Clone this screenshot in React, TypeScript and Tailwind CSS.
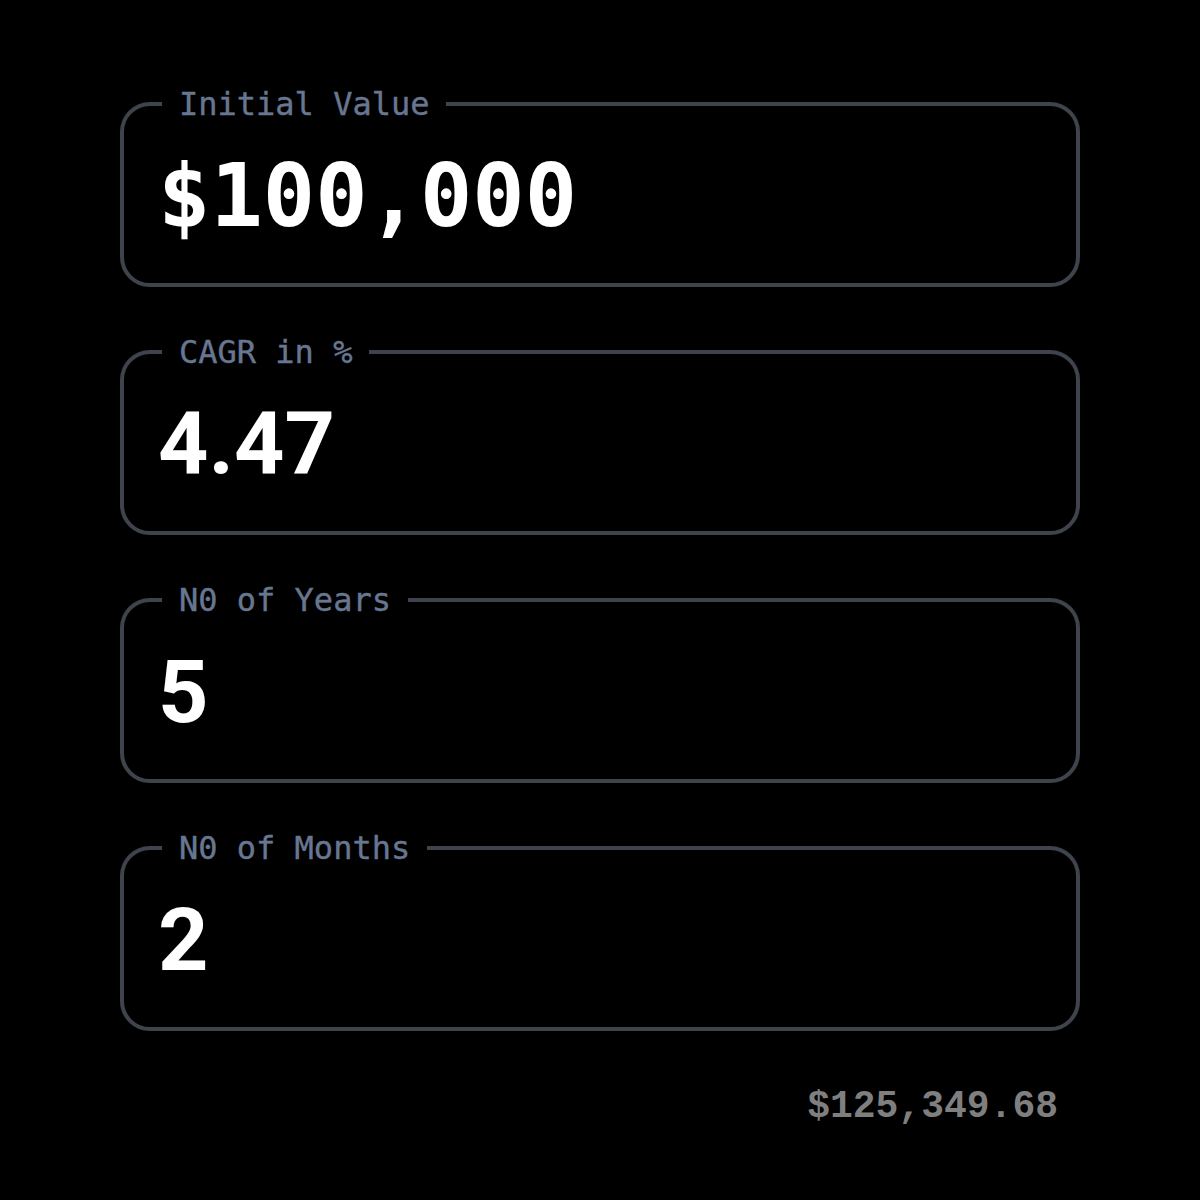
import React from "react";

const fields = [
  { label: "Initial Value", value: "$100,000", mono: true },
  { label: "CAGR in %", value: "4.47", mono: false },
  { label: "N0 of Years", value: "5", mono: false },
  { label: "N0 of Months", value: "2", mono: false },
];

export default function App() {
  return (
    <div className="min-h-screen w-full bg-black flex justify-center pt-[85px]">
      <div className="w-[960px] flex flex-col gap-[46px]">
        {fields.map((f) => (
          <fieldset
            key={f.label}
            className="border-4 border-[#3f434b] rounded-[30px] pl-[34px] pr-[36px] m-0"
          >
            <legend className="ml-[4px] px-[17px] text-[32px] leading-[38px] text-[#687791] font-['DejaVu_Sans_Mono',monospace] [-webkit-text-stroke:0.4px_#687791]">
              {f.label}
            </legend>
            <div className="h-[160px] flex items-center pb-[14px]">
              <span
                className={
                  f.mono
                    ? "text-white font-bold text-[87px] leading-none font-['DejaVu_Sans_Mono',monospace]"
                    : "text-white font-bold text-[88px] leading-none font-['Roboto',sans-serif]"
                }
              >
                {f.value}
              </span>
            </div>
          </fieldset>
        ))}
        <div className="flex justify-end pr-[22px] mt-[11px]">
          <span className="text-[38px] leading-none font-bold text-[#7f7f7f] font-['Liberation_Mono',monospace]">
            $125,349.68
          </span>
        </div>
      </div>
    </div>
  );
}
